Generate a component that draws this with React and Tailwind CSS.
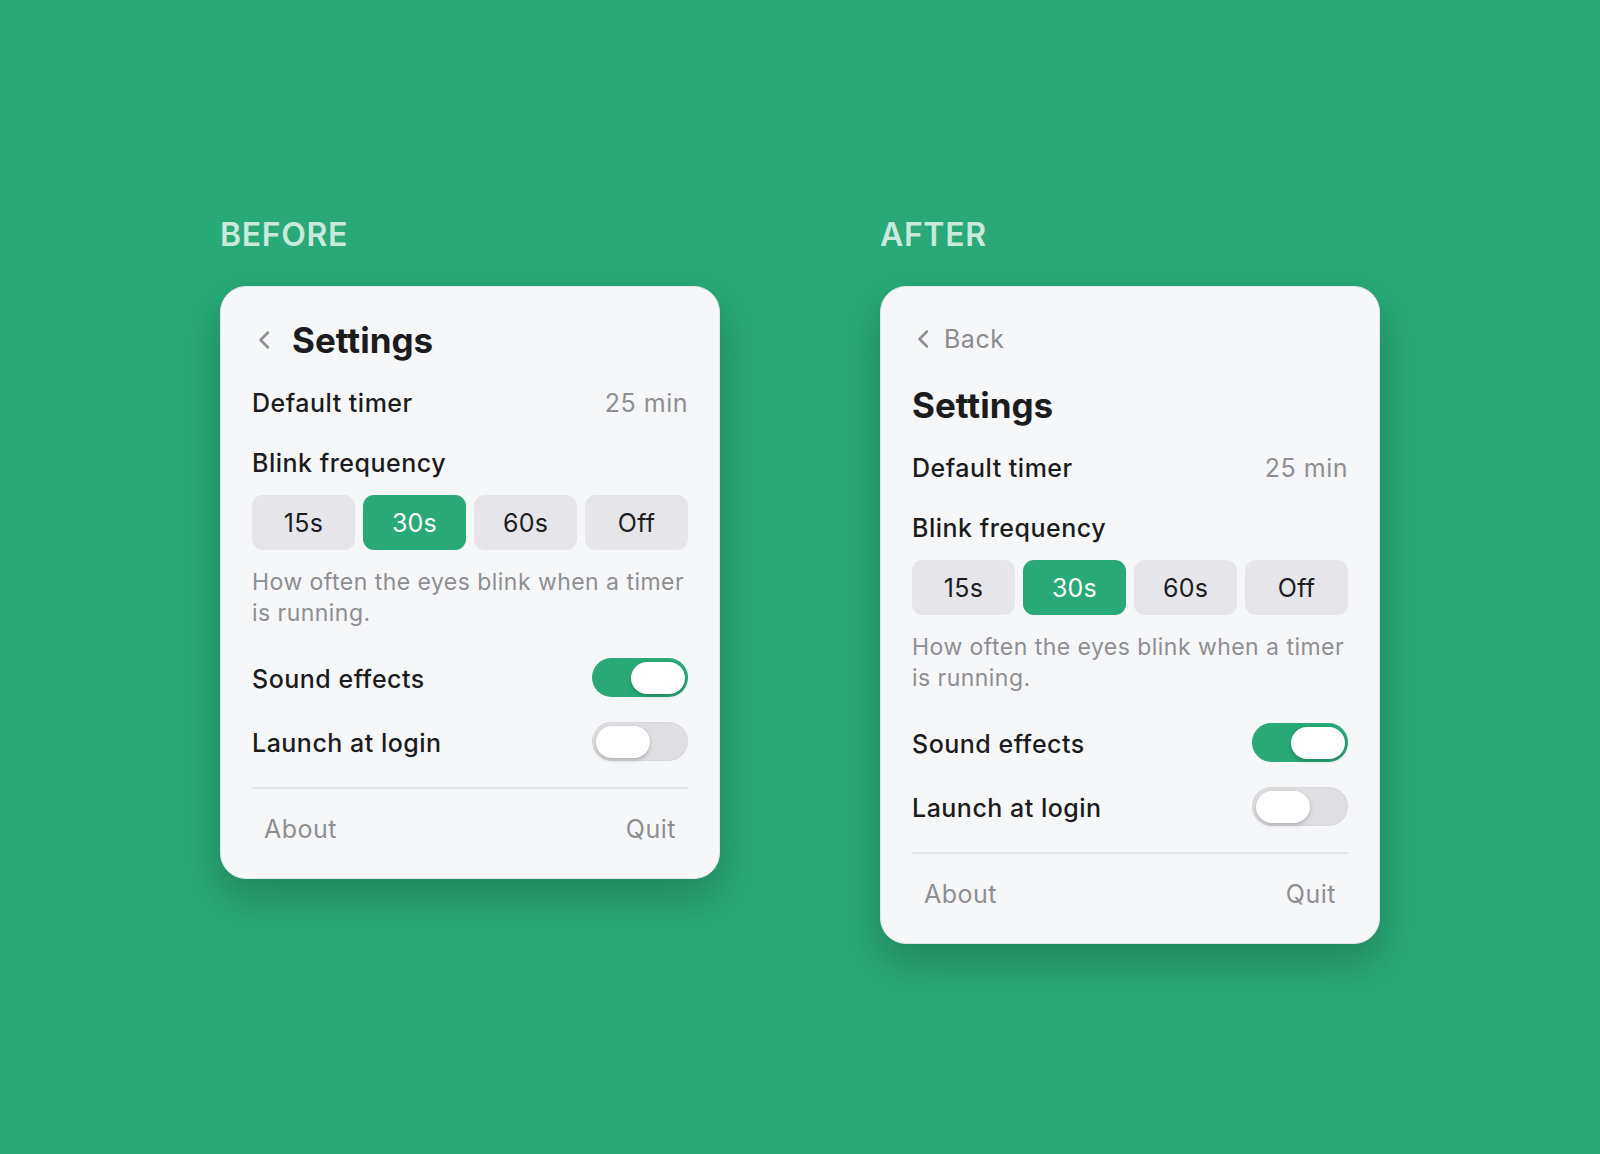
import React from "react";

const Chevron = ({ className }) => (
  <svg width="16" height="22" viewBox="0 0 16 22" fill="none" className={className}>
    <path
      d="M12 3.5 L4.5 11 L12 18.5"
      stroke="#8e8e93"
      strokeWidth="2.5"
      strokeLinecap="round"
      strokeLinejoin="round"
    />
  </svg>
);

function Toggle({ on }) {
  return (
    <div
      className={
        on
          ? "flex h-[39px] w-[96px] items-center justify-end rounded-full bg-[#29a977] p-[3.5px]"
          : "flex h-[39px] w-[96px] items-center justify-start rounded-full bg-[#dfdfe3] p-[3.5px] shadow-[inset_0_0_0_1px_rgba(0,0,0,0.03)]"
      }
    >
      <div className="h-[32px] w-[54px] rounded-full bg-white shadow-[0_2px_4px_rgba(0,0,0,0.22)]" />
    </div>
  );
}

function Segments() {
  const items = ["15s", "30s", "60s", "Off"];
  return (
    <div className="mt-[15px] grid grid-cols-4 gap-2">
      {items.map((it) => (
        <div
          key={it}
          className={
            it === "30s"
              ? "flex h-[55px] items-center justify-center rounded-[11px] bg-[#29a977] pt-[2px] text-[25px] tracking-[0.01em] text-white"
              : "flex h-[55px] items-center justify-center rounded-[11px] bg-[#e5e5ea] pt-[2px] text-[25px] tracking-[0.01em] text-[#1c1c1e]"
          }
        >
          {it}
        </div>
      ))}
    </div>
  );
}

function SettingsCard({ withBack }) {
  return (
    <div className="rounded-[26px] border border-[#e3e5e8] bg-[#f6f7f9] px-[31px] pt-[31px] pb-[32px] shadow-[0_18px_40px_rgba(0,0,0,0.22)]">
      {withBack ? (
        <>
          <div className="flex h-[42px] items-center gap-[13px]">
            <Chevron className="ml-[3px]" />
            <span className="text-[25px] leading-[42px] tracking-[0.02em] text-[#8a8a8f]">Back</span>
          </div>
          <h1 className="mt-[23px] h-[44px] text-[35px] font-bold leading-[44px] text-[#1c1c1e]">
            Settings
          </h1>
        </>
      ) : (
        <div className="flex h-[44px] items-center gap-[20px]">
          <Chevron className="ml-[4px]" />
          <h1 className="text-[35px] font-bold leading-[44px] text-[#1c1c1e]">Settings</h1>
        </div>
      )}

      <div className="mt-[26px] flex h-8 items-center justify-between text-[25px] tracking-[0.02em]">
        <span className="font-medium text-[#1c1c1e]">Default timer</span>
        <span className="text-[#8e8e93]">25 min</span>
      </div>

      <div className="mt-[28px] flex h-8 items-center text-[25px] tracking-[0.02em]">
        <span className="font-medium text-[#1c1c1e]">Blink frequency</span>
      </div>

      <Segments />

      <p className="mt-[17px] text-[23px] leading-[31px] tracking-[0.02em] text-[#8e8e93]">
        How often the eyes blink when a timer is running.
      </p>

      <div className="mt-[29px] flex h-[39px] items-center justify-between text-[25px] tracking-[0.02em]">
        <span className="pt-[4px] font-medium text-[#1c1c1e]">Sound effects</span>
        <Toggle on />
      </div>

      <div className="mt-[25px] flex h-[39px] items-center justify-between text-[25px] tracking-[0.02em]">
        <span className="pt-[4px] font-medium text-[#1c1c1e]">Launch at login</span>
        <Toggle on={false} />
      </div>

      <div className="mt-[26px] h-[2px] bg-[#e5e5ea]" />

      <div className="mt-[25px] flex h-8 items-center justify-between px-3 text-[25px] tracking-[0.02em] text-[#8e8e93]">
        <span>About</span>
        <span>Quit</span>
      </div>
    </div>
  );
}

function Column({ label, children }) {
  return (
    <div className="w-[500px]">
      <div className="mb-[31px] h-[40px] text-[32px] font-semibold leading-[40px] tracking-[0.02em] text-white/75">
        {label}
      </div>
      {children}
    </div>
  );
}

export default function App() {
  return (
    <div className="flex min-h-[1154px] w-full items-start justify-center gap-[160px] bg-[#29a977] pt-[215px] font-['Inter',sans-serif] antialiased">
      <Column label="BEFORE">
        <SettingsCard />
      </Column>
      <Column label="AFTER">
        <SettingsCard withBack />
      </Column>
    </div>
  );
}
